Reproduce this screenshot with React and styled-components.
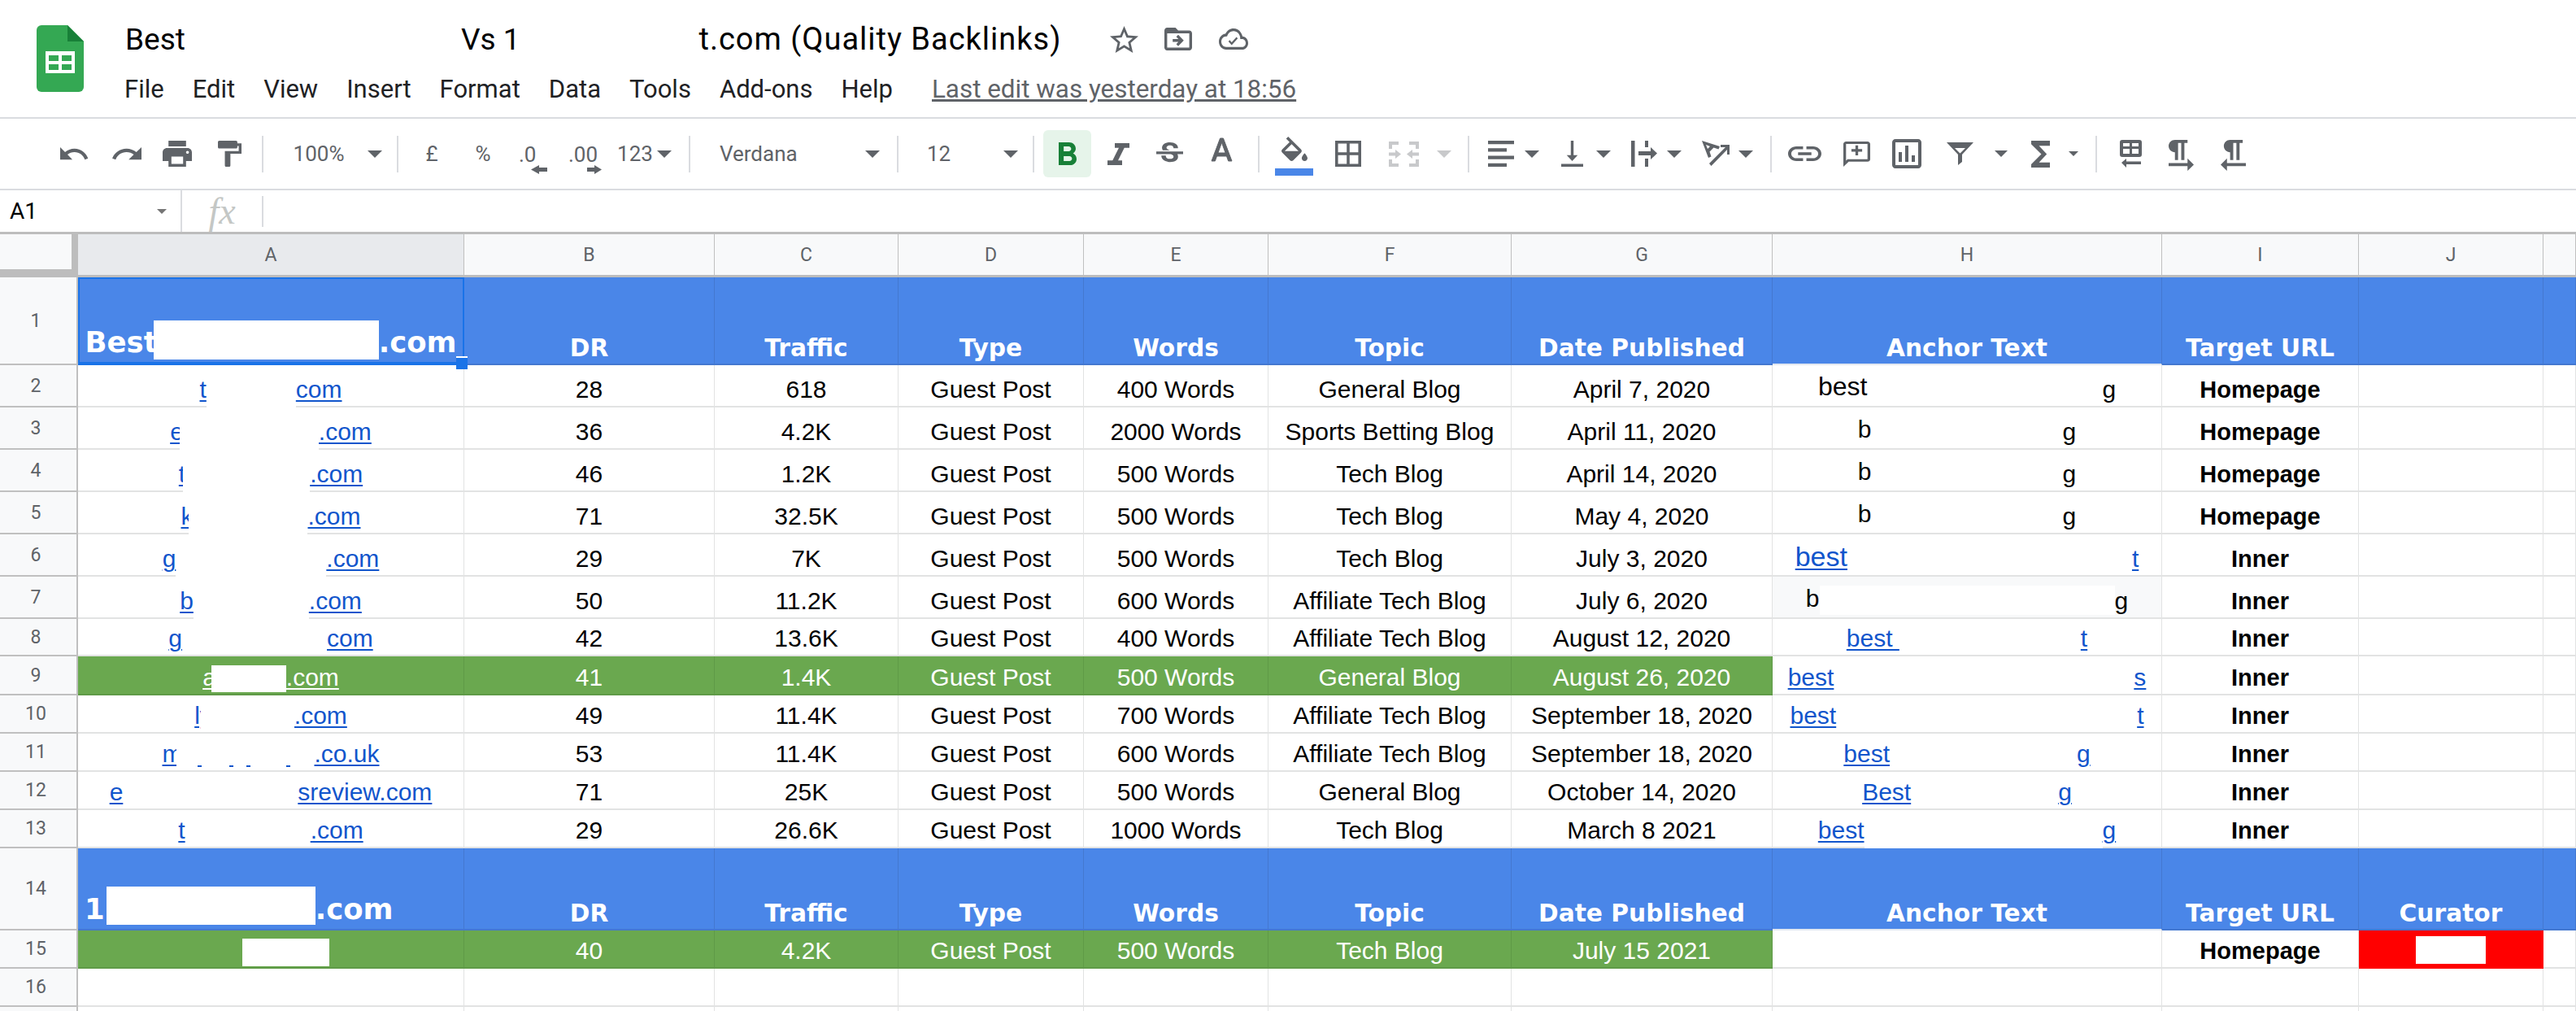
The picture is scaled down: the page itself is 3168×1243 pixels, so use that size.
import React from "react";
import styled, { createGlobalStyle } from "styled-components";

const GRID = "96px 475px 308px 226px 228px 227px 299px 321px 479px 242px 227px 40px";
const ICON = "#5f6368";
const BLUE = "#4a86e8";
const GREEN = "#6aa84f";
const LINK = "#1155cc";

const Global = createGlobalStyle`
  html, body { margin: 0; height: 1243px; overflow: hidden; background: #fff; }
  * { box-sizing: border-box; }
`;

const Page = styled.div`
  width: 3168px;
  height: 1243px;
  overflow: hidden;
  font-family: "Liberation Sans", Arial, sans-serif;
`;

/* title area */
const Header = styled.header`
  height: 146px;
  display: flex;
  padding: 31px 0 0 45px;
  border-bottom: 2px solid #dadce0;
`;

const Logo = styled.svg`
  width: 58px;
  height: 82px;
  flex-shrink: 0;
`;

const TitleColumn = styled.div`
  margin-left: 51px;
  margin-top: -5px;
  display: flex;
  flex-direction: column;
`;

const TitleRow = styled.div`
  display: flex;
  align-items: center;
  height: 44px;
`;

const TitleText = styled.span`
  font-family: Roboto, sans-serif;
  font-size: ${(p) => p.$size || 37}px;
  letter-spacing: ${(p) => p.$track || 0}px;
  color: #000;
  white-space: pre;
  margin-left: ${(p) => p.$gap || 0}px;
`;

const MenuRow = styled.nav`
  display: flex;
  align-items: baseline;
  gap: 35px;
  margin-top: 21px;
  margin-left: -1px;
`;

const MenuItem = styled.span`
  font-family: Roboto, sans-serif;
  font-size: 31px;
  color: #202124;
`;

const LastEdit = styled.span`
  font-family: Roboto, sans-serif;
  font-size: 31.4px;
  color: ${ICON};
  text-decoration: underline;
  margin-left: 13px;
`;

const TitleIcons = styled.div`
  display: flex;
  align-items: center;
  margin-left: 60px;
`;

/* toolbar */
const Toolbar = styled.div`
  height: 88px;
  display: flex;
  align-items: center;
  border-bottom: 2px solid #dadce0;
`;

const Slot = styled.div`
  flex-shrink: 0;
  display: flex;
  align-items: center;
  justify-content: ${(p) => (p.$start ? "flex-start" : "center")};
  width: ${(p) => p.$w}px;
  margin-left: ${(p) => p.$gap}px;
  margin-top: ${(p) => p.$dy || 0}px;
  color: ${ICON};
`;

const Glyph = styled.svg`
  display: block;
  flex-shrink: 0;
  width: ${(p) => p.$w}px;
  height: ${(p) => p.$h}px;
  fill: ${(p) => p.$c || ICON};
  stroke: ${(p) => (p.$heavy ? p.$c || ICON : "none")};
  stroke-width: ${(p) => p.$heavy || 0};
  overflow: visible;
`;

const Sep = styled.div`
  width: 2px;
  height: 45px;
  background: #dadce0;
`;

const ToolText = styled.span`
  font-family: Roboto, sans-serif;
  font-size: 26px;
  line-height: 24px;
  color: ${ICON};
  white-space: nowrap;
`;

const Caret = styled.div`
  width: 0;
  height: 0;
  border-left: ${(p) => (p.$size || 18) / 2}px solid transparent;
  border-right: ${(p) => (p.$size || 18) / 2}px solid transparent;
  border-top: ${(p) => (p.$size || 18) / 2}px solid ${(p) => p.$c || ICON};
`;

const BoldButton = styled.div`
  width: 59px;
  height: 58px;
  border-radius: 6px;
  background: #e6f4ea;
  display: flex;
  align-items: center;
  justify-content: center;
`;

const FillStack = styled.div`
  display: flex;
  flex-direction: column;
  align-items: center;
  gap: 9px;
`;

const ColorBar = styled.div`
  width: 47px;
  height: 9px;
  background: ${BLUE};
`;

const DecimalStack = styled.div`
  width: 100%;
  display: flex;
  flex-direction: column;
  gap: 1px;
  & > svg { align-self: flex-end; }
`;

/* formula bar */
const FormulaBar = styled.div`
  height: 54px;
  display: flex;
  align-items: center;
  border-bottom: 3px solid #bdbdbd;
`;

const NameBox = styled.div`
  width: 224px;
  height: 100%;
  padding: 0 17px 0 12px;
  display: flex;
  align-items: center;
  justify-content: space-between;
  border-right: 2px solid #dadce0;
  font-family: Roboto, sans-serif;
  font-size: 28px;
  color: #000;
`;

const FxBox = styled.div`
  width: 100px;
  height: 38px;
  display: flex;
  align-items: center;
  justify-content: center;
  border-right: 2px solid #dadce0;
  font-family: "Liberation Serif", serif;
  font-style: italic;
  font-size: 46px;
  color: #c4c7c5;
`;

/* sheet */
const SheetRow = styled.div`
  display: grid;
  grid-template-columns: ${GRID};
  height: ${(p) => p.$h}px;
`;

const Corner = styled.div`
  background: #f8f9fa;
  border-right: 8px solid #bdbdbd;
  border-bottom: 10px solid #bdbdbd;
`;

const ColHead = styled.div`
  display: flex;
  align-items: center;
  justify-content: center;
  background: ${(p) => (p.$active ? "#e8eaed" : "#f8f9fa")};
  border-right: 1px solid #c0c0c0;
  border-bottom: 3px solid #bdbdbd;
  font-family: Roboto, sans-serif;
  font-size: 23px;
  color: #5f6368;
`;

const RowHead = styled.div`
  display: flex;
  align-items: center;
  justify-content: center;
  padding-right: 6px;
  background: #f8f9fa;
  border-right: 2px solid #c0c0c0;
  border-bottom: 2px solid #c0c0c0;
  font-family: Roboto, sans-serif;
  font-size: 23px;
  color: #5f6368;
`;

const Cell = styled.div`
  position: relative;
  display: flex;
  align-items: flex-end;
  justify-content: center;
  min-width: 0;
  padding-bottom: ${(p) => p.$pb}px;
  background: ${(p) => p.$bg || "#fff"};
  border-right: 1px solid ${(p) => p.$line || "#e2e3e3"};
  border-bottom: 2px solid ${(p) => p.$under || p.$line || "#e2e3e3"};
  font-size: 30px;
  line-height: 34px;
  color: ${(p) => p.$color || "#000"};
  white-space: nowrap;
`;

const HeadCell = styled(Cell)`
  font-family: "DejaVu Sans", Verdana, sans-serif;
  font-weight: 700;
  font-size: ${(p) => p.$size || 29.7}px;
  color: #fff;
  justify-content: ${(p) => (p.$left ? "flex-start" : "center")};
  padding-left: ${(p) => (p.$left ? 8 : 0)}px;
`;

const Strong = styled.span`
  font-weight: 700;
  font-size: 29px;
`;

const Frag = styled.span`
  white-space: pre;
  flex-shrink: 0;
  color: ${(p) => (p.$link ? p.$linkColor || LINK : "inherit")};
  text-decoration: ${(p) => (p.$link ? "underline" : "none")};
  text-decoration-thickness: 2px;
  text-underline-offset: 3px;
  margin-bottom: ${(p) => p.$up || 0}px;
  ${(p) => p.$size && `font-size: ${p.$size}px;`}
`;

const speck = (x) => `linear-gradient(${LINK},${LINK}) ${x}px 97%/5px 2px no-repeat`;

// the part of a cell's text that was painted out in the screenshot
const Hidden = styled.span`
  position: relative;
  flex-shrink: 0;
  width: ${(p) => p.$w + (p.$cover || 0)}px;
  height: 36px;
  margin-left: ${(p) => -(p.$cover || 0)}px;
  background: ${(p) => (p.$fill || p.$cover ? "#fff" : "none")};
  ${(p) => p.$specks && `background: ${speck(26)}, ${speck(65)}, ${speck(86)}, ${speck(135)}, #fff;`}
  ${(p) =>
    p.$erase &&
    `&::after {
      content: "";
      position: absolute;
      left: 0;
      right: 0;
      bottom: -6px;
      height: 3px;
      background: #fff;
    }`}
`;

const Patch = styled.span`
  flex-shrink: 0;
  width: ${(p) => p.$w + (p.$cover || 0)}px;
  height: ${(p) => p.$h}px;
  background: #fff;
  margin-left: ${(p) => (p.$ml || 0) - (p.$cover || 0)}px;
  margin-bottom: ${(p) => p.$mb || 0}px;
`;

const Selection = styled.div`
  position: absolute;
  z-index: 3;
  left: 0;
  top: 0;
  right: -1px;
  bottom: -2px;
  border: 2px solid #1a73e8;
  border-bottom-width: 4px;
`;

const Handle = styled.div`
  position: absolute;
  right: -6px;
  bottom: -9px;
  width: 14px;
  height: 16px;
  background: #1a73e8;
  border-top: 2px solid #fff;
`;

const Icons = {
  undo: "M12.5 8c-2.65 0-5.05.99-6.9 2.6L2 7v9h9l-3.62-3.62c1.39-1.16 3.16-1.88 5.12-1.88 3.54 0 6.55 2.31 7.6 5.5l2.37-.78C21.08 11.03 17.15 8 12.5 8z",
  redo: "M18.4 10.6C16.55 8.99 14.15 8 11.5 8c-4.65 0-8.58 3.03-9.96 7.22L3.9 16c1.05-3.19 4.05-5.5 7.6-5.5 1.95 0 3.73.72 5.12 1.88L13 16h9V7l-3.6 3.6z",
  print: "M19 8H5c-1.66 0-3 1.34-3 3v6h4v4h12v-4h4v-6c0-1.66-1.34-3-3-3zm-3 11H8v-5h8v5zm3-7c-.55 0-1-.45-1-1s.45-1 1-1 1 .45 1 1-.45 1-1 1zm-1-9H6v4h12V3z",
  paint: "M18 4V3c0-.55-.45-1-1-1H5c-.55 0-1 .45-1 1v4c0 .55.45 1 1 1h12c.55 0 1-.45 1-1V6h1v4H9v11c0 .55.45 1 1 1h2c.55 0 1-.45 1-1v-9h8V4h-3z",
  bold: "M15.6 10.79c.97-.67 1.65-1.77 1.65-2.79 0-2.26-1.75-4-4-4H7v14h7.04c2.09 0 3.71-1.7 3.71-3.79 0-1.52-.86-2.82-2.15-3.42zM10 6.5h3c.83 0 1.5.67 1.5 1.5s-.67 1.5-1.5 1.5h-3v-3zm3.5 9H10v-3h3.5c.83 0 1.5.67 1.5 1.5s-.67 1.5-1.5 1.5z",
  italic: "M10 4v3h2.21l-3.42 8H6v3h8v-3h-2.21l3.42-8H18V4z",
  strike: "M7.24 8.75c-.26-.48-.39-1.03-.39-1.67 0-.61.13-1.16.4-1.67.26-.5.63-.93 1.11-1.29.48-.35 1.05-.63 1.7-.83.66-.19 1.39-.29 2.18-.29.81 0 1.54.11 2.21.34.66.22 1.23.54 1.69.94.47.4.83.88 1.08 1.43.25.55.38 1.15.38 1.81h-3.01c0-.31-.05-.59-.15-.85-.09-.27-.24-.49-.44-.68-.2-.19-.45-.33-.75-.44-.3-.1-.66-.16-1.06-.16-.39 0-.74.04-1.03.13-.29.09-.53.21-.72.36-.19.16-.34.34-.44.55-.1.21-.15.43-.15.66 0 .48.25.88.74 1.21.38.25.77.48 1.41.7H7.39c-.05-.08-.11-.17-.15-.25zM21 12v-2H3v2h9.62c.18.07.4.14.55.2.37.17.66.34.87.51.21.17.35.36.43.57.07.2.11.43.11.69 0 .23-.05.45-.14.66-.09.2-.23.38-.42.53-.19.15-.42.26-.71.35-.29.08-.63.13-1.01.13-.43 0-.83-.04-1.18-.13s-.66-.23-.91-.42c-.25-.19-.45-.44-.59-.75-.14-.31-.25-.76-.25-1.21H6.4c0 .55.08 1.13.24 1.58.16.45.37.85.65 1.21.28.35.6.66.98.92.37.26.78.48 1.22.65.44.17.9.3 1.38.39.48.08.96.13 1.44.13.8 0 1.53-.09 2.18-.28s1.21-.45 1.67-.79c.46-.34.82-.77 1.07-1.27s.38-1.07.38-1.71c0-.6-.1-1.14-.31-1.61-.05-.11-.11-.23-.17-.33H21z",
  textA: "M11 3 5.5 17h2.25l1.12-3h6.25l1.12 3h2.25L13 3h-2zm-1.38 9L12 5.67 14.38 12H9.62z",
  fill: "M16.56 8.94 7.62 0 6.21 1.41l2.38 2.38-5.15 5.15c-.59.59-.59 1.54 0 2.12l5.5 5.5c.29.29.68.44 1.06.44s.77-.15 1.06-.44l5.5-5.5c.59-.58.59-1.53 0-2.12zM5.21 10 10 5.21 14.79 10H5.21zM19 11.5s-2 2.17-2 3.5c0 1.1.9 2 2 2s2-.9 2-2c0-1.33-2-3.5-2-3.5z",
  borders: "M3 3v18h18V3H3zm8 16H5v-6h6v6zm0-8H5V5h6v6zm8 8h-6v-6h6v6zm0-8h-6V5h6v6z",
  merge: "M0 0h12v4H4v5H0zM25 0h12v9h-4V4h-8zM0 22h4v5h8v4H0zM33 22h4v9H25v-4h8zM0 13.5h8V10l7 5.5-7 5.5v-3.5H0zM37 13.5h-8V10l-7 5.5 7 5.5v-3.5h8z",
  align: "M0 0h32v4H0zM0 9h23v4H0zM0 18h32v4H0zM0 27h23v4H0z",
  valign: "M16 13h-3V3h-2v10H8l4 4 4-4zM4 19v2h16v-2H4z",
  wrap: "M0 0h4.5v32H0zM17 0h4v8h-4zM17 22h4v10h-4zM9 13h15V8l8 7.5-8 7.5v-5H9z",
  rotate: "M0 0l22 7-1.5 3.5-6-2-5 5 2 6L8 21zM5 5l2 5 3-3zM9 28l20-20h-6V5h11v12h-3v-6L11.5 31z",
  link: "M3.9 12c0-1.71 1.39-3.1 3.1-3.1h4V7H7c-2.76 0-5 2.24-5 5s2.24 5 5 5h4v-1.9H7c-1.71 0-3.1-1.39-3.1-3.1zM8 13h8v-2H8v2zm9-6h-4v1.9h4c1.71 0 3.1 1.39 3.1 3.1s-1.39 3.1-3.1 3.1h-4V17h4c2.76 0 5-2.24 5-5s-2.24-5-5-5z",
  comment: "M20 2H4c-1.1 0-2 .9-2 2v18l4-4h14c1.1 0 2-.9 2-2V4c0-1.1-.9-2-2-2zm0 14H5.17L4 17.17V4h16v12zM13 5h-2v3H8v2h3v3h2v-3h3V8h-3z",
  chart: "M19 3H5c-1.1 0-2 .9-2 2v14c0 1.1.9 2 2 2h14c1.1 0 2-.9 2-2V5c0-1.1-.9-2-2-2zm0 16H5V5h14v14zM7 11h2v6H7zm4-4h2v10h-2zm4 6h2v4h-2z",
  filter: "M0 0h33L19 15v9l-5 4V15zM10 7l6.5 6.5L23 7z",
  sigma: "M18 4H6v2l6.5 6L6 18v2h12v-3h-7l5-5-5-5h7z",
  table: "M3 0h21a3 3 0 0 1 3 3v15a3 3 0 0 1-3 3H3a3 3 0 0 1-3-3V3a3 3 0 0 1 3-3zM4 4v4h8V4zM15 4v4h8V4zM4 11v6h8v-6zM15 11v6h8v-6zM2 28l6-5v3.5h18V30H8v4z",
  ltr: "M9 10v5h2V4h2v11h2V4h2V2H9C6.79 2 5 3.79 5 6s1.79 4 4 4zm12 8-4-4v3H5v2h12v3l4-4z",
  rtl: "M10 10v5h2V4h2v11h2V4h2V2h-8C7.79 2 6 3.79 6 6s1.79 4 4 4zm-2 7v-3l-4 4 4 4v-3h12v-2H8z",
  star: "M22 9.24l-7.19-.62L12 2 9.19 8.63 2 9.24l5.46 4.73L5.82 21 12 17.27 18.18 21l-1.63-7.03L22 9.24zM12 15.4l-3.76 2.27 1-4.28-3.32-2.88 4.38-.38L12 6.1l1.71 4.04 4.38.38-3.32 2.88 1 4.28L12 15.4z",
  move: "M20 6h-8l-2-2H4c-1.1 0-1.99.9-1.99 2L2 18c0 1.1.9 2 2 2h16c1.1 0 2-.9 2-2V8c0-1.1-.9-2-2-2zm0 12H4V8h16v10zm-8.01-9l-1.41 1.41L12.16 12H8v2h4.16l-1.59 1.59L11.99 17 16 13.01 11.99 9z",
  cloud: "M19.35 10.04C18.67 6.59 15.64 4 12 4 9.11 4 6.6 5.64 5.35 8.04 2.34 8.36 0 10.91 0 14c0 3.31 2.69 6 6 6h13c2.76 0 5-2.24 5-5 0-2.64-2.05-4.78-4.65-4.96zM19 18H6c-2.21 0-4-1.79-4-4s1.79-4 4-4h.71C7.37 7.69 9.48 6 12 6c3.04 0 5.5 2.46 5.5 5.5v.5H19c1.66 0 3 1.34 3 3s-1.34 3-3 3zM10.5 14.4 8.9 12.8l-1.1 1.1 2.7 2.7 5-5-1.1-1.1z",
  arrowL: "M0 4.5 8 0v2.5h8v4H8V9z",
  arrowR: "M16 4.5 8 0v2.5H0v4h8V9z",
};

const Icon = ({ name, box, w, h, c, heavy }) => (
  <Glyph viewBox={box} preserveAspectRatio="none" $w={w} $h={h} $c={c} $heavy={heavy}>
    <path d={Icons[name]} fillRule="evenodd" />
  </Glyph>
);

const tools = [
  { x: 74, w: 36, el: <Icon name="undo" box="2 7 21.5 9.5" w={36} h={16} /> },
  { x: 138, w: 36, el: <Icon name="redo" box="1.5 7 20.5 9.5" w={36} h={16} /> },
  { x: 200, w: 36, el: <Icon name="print" box="2 3 20 18" w={36} h={32} /> },
  { x: 268, w: 29, el: <Icon name="paint" box="4 2 17 20" w={29} h={32} /> },
  { x: 322, w: 2, el: <Sep /> },
  { x: 359, w: 66, el: <ToolText>100%</ToolText> },
  { x: 452, w: 18, el: <Caret /> },
  { x: 488, w: 2, el: <Sep /> },
  { x: 523, w: 16, el: <ToolText>£</ToolText> },
  { x: 584, w: 20, el: <ToolText>%</ToolText> },
  {
    x: 638,
    w: 35,
    dy: 14,
    start: true,
    el: (
      <DecimalStack>
        <ToolText>.0</ToolText>
        <Icon name="arrowL" box="0 0 16 9" w={20} h={11} />
      </DecimalStack>
    ),
  },
  {
    x: 699,
    w: 41,
    dy: 14,
    start: true,
    el: (
      <DecimalStack>
        <ToolText>.00</ToolText>
        <Icon name="arrowR" box="0 0 16 9" w={18} h={11} />
      </DecimalStack>
    ),
  },
  { x: 758, w: 46, el: <ToolText>123</ToolText> },
  { x: 808, w: 18, el: <Caret /> },
  { x: 847, w: 2, el: <Sep /> },
  { x: 885, w: 100, start: true, el: <ToolText>Verdana</ToolText> },
  { x: 1064, w: 18, el: <Caret /> },
  { x: 1103, w: 2, el: <Sep /> },
  { x: 1140, w: 30, start: true, el: <ToolText>12</ToolText> },
  { x: 1234, w: 18, el: <Caret /> },
  { x: 1270, w: 2, el: <Sep /> },
  {
    x: 1283,
    w: 59,
    el: (
      <BoldButton>
        <Icon name="bold" box="7 4 10.75 14" w={22} h={28} c="#188038" />
      </BoldButton>
    ),
  },
  { x: 1362, w: 27, el: <Icon name="italic" box="6 4 12 14" w={27} h={27} /> },
  { x: 1422, w: 33, el: <Icon name="strike" box="3 3 18 18" w={33} h={29} /> },
  { x: 1490, w: 25, dy: -11, el: <Icon name="textA" box="5.5 3 13 14" w={25} h={28} heavy={0.5} /> },
  { x: 1547, w: 2, el: <Sep /> },
  {
    x: 1568,
    w: 47,
    dy: 6,
    el: (
      <FillStack>
        <Icon name="fill" box="3 0 18 17" w={32} h={30} />
        <ColorBar />
      </FillStack>
    ),
  },
  { x: 1642, w: 32, el: <Icon name="borders" box="3 3 18 18" w={32} h={32} /> },
  { x: 1708, w: 37, el: <Icon name="merge" box="0 0 37 31" w={37} h={31} c="#c8c9cb" /> },
  { x: 1767, w: 18, el: <Caret $c="#c8c9cb" /> },
  { x: 1805, w: 2, el: <Sep /> },
  { x: 1830, w: 32, el: <Icon name="align" box="0 0 32 31" w={32} h={32} /> },
  { x: 1875, w: 18, el: <Caret /> },
  { x: 1920, w: 27, el: <Icon name="valign" box="4 3 16 18" w={27} h={32} /> },
  { x: 1963, w: 18, el: <Caret /> },
  { x: 2006, w: 32, el: <Icon name="wrap" box="0 0 32 32" w={32} h={32} /> },
  { x: 2050, w: 18, el: <Caret /> },
  { x: 2093, w: 34, el: <Icon name="rotate" box="0 0 34 32" w={34} h={32} /> },
  { x: 2138, w: 18, el: <Caret /> },
  { x: 2177, w: 2, el: <Sep /> },
  { x: 2199, w: 41, el: <Icon name="link" box="2 7 20 10" w={41} h={18} /> },
  { x: 2267, w: 33, el: <Icon name="comment" box="2 2 20 20" w={33} h={31} /> },
  { x: 2327, w: 36, el: <Icon name="chart" box="3 3 18 18" w={36} h={36} /> },
  { x: 2394, w: 33, el: <Icon name="filter" box="0 0 33 28" w={33} h={28} /> },
  { x: 2452, w: 17, el: <Caret $size={17} /> },
  { x: 2498, w: 23, el: <Icon name="sigma" box="6 4 12 16" w={23} h={33} /> },
  { x: 2544, w: 12, el: <Caret $size={12} /> },
  { x: 2577, w: 2, el: <Sep /> },
  { x: 2607, w: 27, el: <Icon name="table" box="0 0 27 34" w={27} h={34} /> },
  { x: 2667, w: 31, dy: 3, el: <Icon name="ltr" box="5 2 16 20" w={31} h={38} /> },
  { x: 2731, w: 31, dy: 3, el: <Icon name="rtl" box="4 2 16 20" w={31} h={38} /> },
];

const letters = ["A", "B", "C", "D", "E", "F", "G", "H", "I", "J", ""];

const heads = ["DR", "Traffic", "Type", "Words", "Topic", "Date Published", "Anchor Text", "Target URL"];

// a and anchor: [text before, hidden width, text after, lift, font size]; cover = px of the first text painted over
const rows = [
  { n: 2, h: 52, pb: 3, a: ["t", 110, "com"], erase: true, v: ["28", "618", "Guest Post", "400 Words", "General Blog", "April 7, 2020"], anchor: ["best", 289, "g", 4, 32], target: "Homepage" },
  { n: 3, h: 52, pb: 3, a: ["e", 166, ".com"], cover: 5, erase: true, v: ["36", "4.2K", "Guest Post", "2000 Words", "Sports Betting Blog", "April 11, 2020"], anchor: ["b", 235, "g", 3], target: "Homepage" },
  { n: 4, h: 52, pb: 3, a: ["t", 153, ".com"], cover: 3, erase: true, v: ["46", "1.2K", "Guest Post", "500 Words", "Tech Blog", "April 14, 2020"], anchor: ["b", 235, "g", 3], target: "Homepage" },
  { n: 5, h: 52, pb: 3, a: ["k", 141, ".com"], cover: 5, erase: true, v: ["71", "32.5K", "Guest Post", "500 Words", "Tech Blog", "May 4, 2020"], anchor: ["b", 235, "g", 3], target: "Homepage" },
  { n: 6, h: 52, pb: 3, a: ["g", 185, ".com"], erase: true, v: ["29", "7K", "Guest Post", "500 Words", "Tech Blog", "July 3, 2020"], anchor: ["best", 350, "t", 3, 34], anchorLink: true, target: "Inner" },
  { n: 7, h: 52, pb: 3, a: ["b", 142, ".com"], erase: true, v: ["50", "11.2K", "Guest Post", "600 Words", "Affiliate Tech Blog", "July 6, 2020"], anchor: ["b", 363, "g", 3], anchorFill: true, target: "Inner" },
  { n: 8, h: 46, pb: 3, a: ["g", 178, "com"], v: ["42", "13.6K", "Guest Post", "400 Words", "Affiliate Tech Blog", "August 12, 2020"], anchor: ["best ", 223, "t"], anchorLink: true, target: "Inner" },
  { n: 9, h: 48, pb: 3, green: true, a: ["a", 86, ".com"], cover: 6, v: ["41", "1.4K", "Guest Post", "500 Words", "General Blog", "August 26, 2020"], anchor: ["best", 369, "s"], anchorLink: true, target: "Inner" },
  { n: 10, h: 47, pb: 3, a: ["ly", 101, ".com"], cover: 14, v: ["49", "11.4K", "Guest Post", "700 Words", "Affiliate Tech Blog", "September 18, 2020"], anchor: ["best", 370, "t"], anchorLink: true, target: "Inner" },
  { n: 11, h: 47, pb: 3, a: ["m", 162, ".co.uk"], specks: true, cover: 7, v: ["53", "11.4K", "Guest Post", "600 Words", "Affiliate Tech Blog", "September 18, 2020"], anchor: ["best", 230, "g"], anchorLink: true, target: "Inner" },
  { n: 12, h: 47, pb: 3, a: ["e", 215, "sreview.com"], v: ["71", "25K", "Guest Post", "500 Words", "General Blog", "October 14, 2020"], anchor: ["Best", 181, "g"], anchorLink: true, target: "Inner" },
  { n: 13, h: 47, pb: 3, a: ["t", 154, ".com"], v: ["29", "26.6K", "Guest Post", "1000 Words", "Tech Blog", "March 8 2021"], anchor: ["best", 293, "g"], anchorLink: true, anchorErase: true, target: "Inner" },
];

const Split = ({ parts, link, erase, fill, specks, patch, linkColor, cover }) => (
  <>
    <Frag $link={link} $linkColor={linkColor} $up={parts[3]} $size={parts[4]}>
      {parts[0]}
    </Frag>
    {patch ? (
      <Patch $w={parts[1]} $h={33} $mb={-1} $cover={cover} />
    ) : (
      <Hidden $w={parts[1]} $erase={erase} $fill={fill} $specks={specks} $cover={cover} />
    )}
    <Frag $link={link} $linkColor={linkColor}>
      {parts[2]}
    </Frag>
  </>
);

const HeaderBand = ({ n, first, curator }) => (
  <SheetRow $h={n === 1 ? 108 : 101}>
    <RowHead>{n}</RowHead>
    <HeadCell $bg={BLUE} $line="#4478d0" $pb={first ? 9 : 7} $size={35.5} $left={!first}>
      {first ? (
        <>
          <Frag>Best</Frag>
          <Patch $w={272} $h={48} $cover={5} $mb={-4} />
          <Frag>.com</Frag>
          <Selection>
            <Handle />
          </Selection>
        </>
      ) : (
        <>
          <Frag>1</Frag>
          <Patch $w={257} $h={47} $ml={2} $mb={-2} />
          <Frag>.com</Frag>
        </>
      )}
    </HeadCell>
    {heads.map((t) => (
      <HeadCell key={t} $bg={BLUE} $line="#4478d0" $pb={2} $under={t === "Anchor Text" ? "#e3e8f0" : undefined}>
        {t}
      </HeadCell>
    ))}
    <HeadCell $bg={BLUE} $line="#4478d0" $pb={2}>
      {curator ? "Curator" : ""}
    </HeadCell>
    <HeadCell $bg={BLUE} $line="#4478d0" $pb={2} />
  </SheetRow>
);

const DataRow = ({ row }) => {
  const bg = row.green ? GREEN : undefined;
  const color = row.green ? "#fff" : undefined;
  const line = row.green ? "#5f9a47" : undefined;
  return (
    <SheetRow $h={row.h}>
      <RowHead>{row.n}</RowHead>
      <Cell $pb={row.pb} $bg={bg} $color={color} $line={line}>
        <Split
          parts={row.a}
          link
          erase={row.erase}
          specks={row.specks}
          patch={row.green}
          cover={row.cover}
          linkColor={row.green ? "#fff" : undefined}
        />
      </Cell>
      {row.v.map((t, i) => (
        <Cell key={i} $pb={row.pb} $bg={bg} $color={color} $line={line}>
          {t}
        </Cell>
      ))}
      <Cell $pb={row.pb} $bg={row.anchorFill ? "#f8f9fa" : undefined}>
        <Split parts={row.anchor} link={row.anchorLink} fill={row.anchorFill} erase={row.anchorErase} />
      </Cell>
      <Cell $pb={row.pb}>
        <Strong>{row.target}</Strong>
      </Cell>
      <Cell $pb={row.pb} />
      <Cell $pb={row.pb} />
    </SheetRow>
  );
};

const App = () => {
  let edge = 0;
  return (
    <Page>
      <Global />
      <Header>
        <Logo viewBox="0 0 58 82">
          <path d="M6 0h32l20 20v56a6 6 0 0 1-6 6H6a6 6 0 0 1-6-6V6a6 6 0 0 1 6-6z" fill="#34a853" />
          <path d="M38 0l20 20H38z" fill="#188038" />
          <path d="M11 32h36v27H11z" fill="#fff" />
          <path d="M15 37h12v7H15zM31 37h12v7H31zM15 48h12v7H15zM31 48h12v7H31z" fill="#34a853" />
        </Logo>
        <TitleColumn>
          <TitleRow>
            <TitleText>Best</TitleText>
            <TitleText $gap={339}>Vs 1</TitleText>
            <TitleText $gap={220} $size={38} $track={1}>
              t.com (Quality Backlinks)
            </TitleText>
            <TitleIcons>
              <Icon name="star" box="2 2 20 19" w={35} h={33} />
              <Slot $w={34} $gap={32}>
                <Icon name="move" box="2 4 20 16" w={34} h={28} />
              </Slot>
              <Slot $w={36} $gap={33}>
                <Icon name="cloud" box="0 4 24 16" w={36} h={26} />
              </Slot>
            </TitleIcons>
          </TitleRow>
          <MenuRow>
            {["File", "Edit", "View", "Insert", "Format", "Data", "Tools", "Add-ons", "Help"].map((m) => (
              <MenuItem key={m}>{m}</MenuItem>
            ))}
            <LastEdit>Last edit was yesterday at 18:56</LastEdit>
          </MenuRow>
        </TitleColumn>
      </Header>
      <Toolbar>
        {tools.map((t) => {
          const gap = t.x - edge;
          edge = t.x + t.w;
          return (
            <Slot key={t.x} $w={t.w} $gap={gap} $dy={t.dy} $start={t.start}>
              {t.el}
            </Slot>
          );
        })}
      </Toolbar>
      <FormulaBar>
        <NameBox>
          A1
          <Caret $size={12} $c="#757575" />
        </NameBox>
        <FxBox>fx</FxBox>
      </FormulaBar>
      <SheetRow $h={53}>
        <Corner />
        {letters.map((l, i) => (
          <ColHead key={i} $active={l === "A"}>
            {l}
          </ColHead>
        ))}
      </SheetRow>
      <HeaderBand n={1} first />
      {rows.map((r) => (
        <DataRow key={r.n} row={r} />
      ))}
      <HeaderBand n={14} curator />
      <SheetRow $h={47}>
        <RowHead>15</RowHead>
        <Cell $pb={1} $bg={GREEN} $line="#5f9a47">
          <Patch $w={107} $h={34} $ml={36} $mb={0} />
        </Cell>
        {["40", "4.2K", "Guest Post", "500 Words", "Tech Blog", "July 15 2021"].map((t) => (
          <Cell key={t} $pb={3} $bg={GREEN} $color="#fff" $line="#5f9a47">
            {t}
          </Cell>
        ))}
        <Cell $pb={3} />
        <Cell $pb={3}>
          <Strong>Homepage</Strong>
        </Cell>
        <Cell $pb={4} $bg="#ff0000" $line="#ff0000">
          <Patch $w={86} $h={34} />
        </Cell>
        <Cell $pb={3} />
      </SheetRow>
      <SheetRow $h={47}>
        <RowHead>16</RowHead>
        {letters.map((l, i) => (
          <Cell key={i} $pb={3} />
        ))}
      </SheetRow>
      <SheetRow $h={47}>
        <RowHead />
        {letters.map((l, i) => (
          <Cell key={i} $pb={3} />
        ))}
      </SheetRow>
    </Page>
  );
};

export default App;
